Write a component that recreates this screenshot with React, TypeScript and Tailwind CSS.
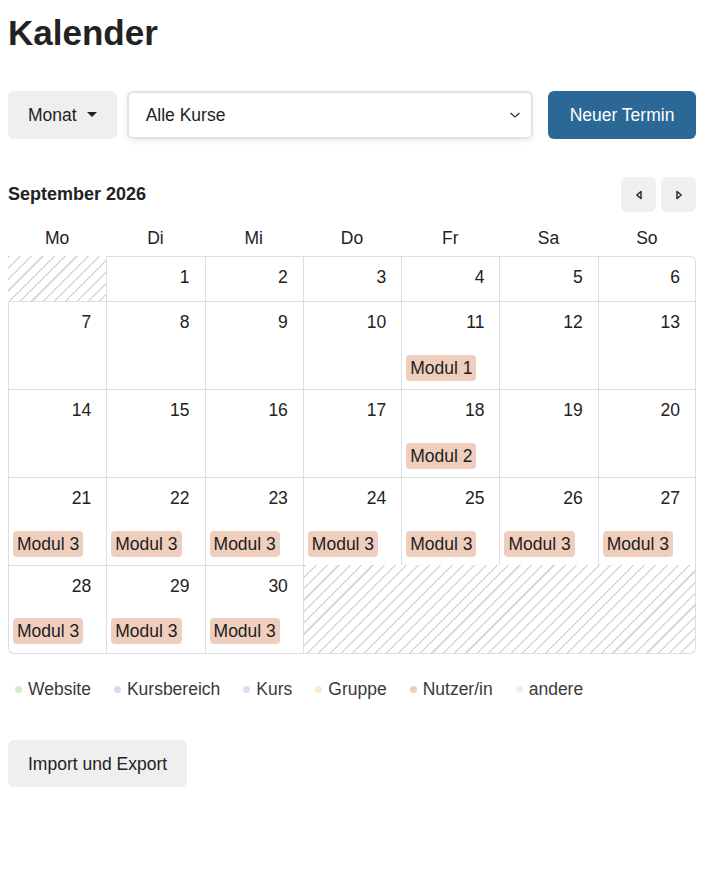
import React from 'react';

type Day = { n: number; events?: string[] };

const font = { fontFamily: '"Liberation Sans", Arial, sans-serif' };

const legend = [
  { label: 'Website', color: 'bg-[#d4ebc6]' },
  { label: 'Kursbereich', color: 'bg-[#ddd8f2]' },
  { label: 'Kurs', color: 'bg-[#d8dff5]' },
  { label: 'Gruppe', color: 'bg-[#fbe9c9]' },
  { label: 'Nutzer/in', color: 'bg-[#efcdbd]' },
  { label: 'andere', color: 'bg-[#eeeeee]' },
];

const weekdays = ['Mo', 'Di', 'Mi', 'Do', 'Fr', 'Sa', 'So'];

const hatch =
  'bg-[repeating-linear-gradient(135deg,#d9d9d9_0px,#d9d9d9_1.5px,transparent_1.5px,transparent_8px)]';

const weeks: (Day | null)[][] = [
  [null, { n: 1 }, { n: 2 }, { n: 3 }, { n: 4 }, { n: 5 }, { n: 6 }],
  [{ n: 7 }, { n: 8 }, { n: 9 }, { n: 10 }, { n: 11, events: ['Modul 1'] }, { n: 12 }, { n: 13 }],
  [{ n: 14 }, { n: 15 }, { n: 16 }, { n: 17 }, { n: 18, events: ['Modul 2'] }, { n: 19 }, { n: 20 }],
  [21, 22, 23, 24, 25, 26, 27].map((n) => ({ n, events: ['Modul 3'] })),
  [{ n: 28, events: ['Modul 3'] }, { n: 29, events: ['Modul 3'] }, { n: 30, events: ['Modul 3'] }, null, null, null, null],
];

const rowHeight = (r: number) =>
  r === 0 ? 'h-[45px]' : r === weeks.length - 1 ? 'h-[89px]' : 'h-[88px]';

function Triangle({ dir }: { dir: 'left' | 'right' }) {
  return (
    <svg width="8" height="10" viewBox="0 0 8 10" fill="none">
      {dir === 'left' ? (
        <path d="M6 1.5 L1.8 5 L6 8.5 Z" stroke="#222" strokeWidth="1.4" strokeLinejoin="round" />
      ) : (
        <path d="M2 1.5 L6.2 5 L2 8.5 Z" stroke="#222" strokeWidth="1.4" strokeLinejoin="round" />
      )}
    </svg>
  );
}

function DayCell({ day, row, col }: { day: Day; row: number; col: number }) {
  const last = row === weeks.length - 1;
  return (
    <div
      className={[
        'flex flex-col border-t border-l border-[#dedede]',
        col === 6 ? 'border-r' : '',
        last ? 'border-b' : '',
        row === 0 && col === 6 ? 'rounded-tr-md' : '',
        last && col === 0 ? 'rounded-bl-md' : '',
        rowHeight(row),
      ].join(' ')}
    >
      <div className="pt-[8px] pr-[15px] text-right leading-[24px]">{day.n}</div>
      {day.events && (
        <div className={`mt-auto ${last ? 'mb-[9px]' : 'mb-[8px]'} pl-[4px] flex flex-col gap-1`}>
          {day.events.map((e) => (
            <span key={e} className="self-start rounded-[4px] bg-[#efcebe] px-[4px] leading-[26px] text-[#1d1d1d]">
              {e}
            </span>
          ))}
        </div>
      )}
    </div>
  );
}

export default function App() {
  return (
    <div className="min-h-screen bg-white pl-2 pr-[26px] pt-[12px] text-[17.5px] text-[#222]" style={font}>
      <h1 className="text-[35px] font-bold leading-[42px]">Kalender</h1>

      <div className="mt-[37px] flex items-stretch">
        <button className="flex h-[48px] items-center gap-[10px] rounded-md bg-[#efefef] px-[20px]">
          Monat
          <svg width="10" height="6" viewBox="0 0 10 6">
            <path d="M0 0 H10 L5 5 Z" fill="#222" />
          </svg>
        </button>
        <div className="ml-[10px] flex h-[48px] flex-1 items-center justify-between rounded-md border-2 border-[#e3e3e3] bg-white pl-[17px] pr-[10px] shadow-[0_2px_6px_rgba(0,0,0,0.08)]">
          <span>Alle Kurse</span>
          <svg width="12" height="8" viewBox="0 0 12 8" fill="none">
            <path d="M1.5 2 L6 6 L10.5 2" stroke="#333" strokeWidth="1.3" />
          </svg>
        </div>
        <button className="ml-[15px] flex h-[48px] w-[148px] items-center justify-center rounded-md bg-[#2b6896] text-white">
          Neuer Termin
        </button>
      </div>

      <div className="mt-[38px] flex items-center justify-between">
        <h2 className="text-[18px] font-bold">September 2026</h2>
        <div className="flex gap-[5px]">
          <button className="flex h-[35px] w-[35px] items-center justify-center rounded-md bg-[#efefef]">
            <Triangle dir="left" />
          </button>
          <button className="flex h-[35px] w-[35px] items-center justify-center rounded-md bg-[#efefef]">
            <Triangle dir="right" />
          </button>
        </div>
      </div>

      <div className="mt-[14px] grid grid-cols-7">
        {weekdays.map((d) => (
          <div key={d} className="text-center leading-[24px]">
            {d}
          </div>
        ))}
      </div>

      <div className="mt-[6px] grid grid-cols-7">
        {weeks.map((week, r) => {
          const cells: React.ReactNode[] = [];
          let c = 0;
          while (c < 7) {
            const day = week[c];
            if (day) {
              cells.push(<DayCell key={`${r}-${c}`} day={day} row={r} col={c} />);
              c++;
            } else {
              let span = 0;
              while (c + span < 7 && !week[c + span]) span++;
              const endsRow = c + span === 7;
              const last = r === weeks.length - 1;
              cells.push(
                <div
                  key={`${r}-${c}-empty`}
                  className={[
                    hatch,
                    span === 4 ? 'col-span-4' : 'col-span-1',
                    rowHeight(r),
                    endsRow ? 'border-r border-[#dedede]' : '',
                    last ? 'border-b border-l border-[#dedede] rounded-br-md' : '',
                  ].join(' ')}
                />
              );
              c += span;
            }
          }
          return cells;
        })}
      </div>

      <div className="mt-[22px] flex items-center gap-[23px] pl-[7px] text-[#3a3a3a]">
        {legend.map((l) => (
          <div key={l.label} className="flex items-center gap-[6px]">
            <span className={`h-[7px] w-[7px] rounded-full ${l.color}`} />
            <span>{l.label}</span>
          </div>
        ))}
      </div>

      <button className="mt-[38px] h-[47px] rounded-md bg-[#efefef] px-[20px]">Import und Export</button>
    </div>
  );
}
